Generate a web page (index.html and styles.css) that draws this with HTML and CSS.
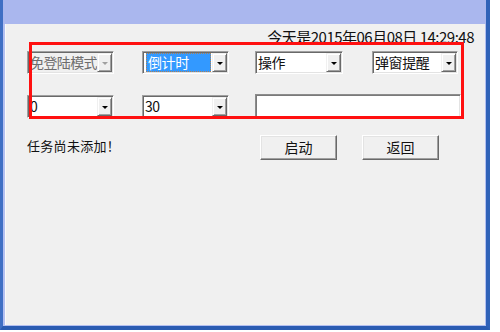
FILE: index.html
```html
<!DOCTYPE html>
<html lang="zh-CN">
<head>
<meta charset="utf-8">
<link rel="stylesheet" href="styles.css">
</head>
<body>
<div class="window">
  <div class="titlebar"></div>
  <div class="client">
    <div class="date">今天是2015年06月08日 14:29:48</div>
    <div class="row row1">
      <div class="combo disabled c1"><span class="val">免登陆模式</span><span class="dd"><i class="arrow"></i></span></div>
      <div class="combo c2"><span class="val sel">倒计时</span><span class="dd"><i class="arrow"></i></span></div>
      <div class="combo c3"><span class="val">操作</span><span class="dd"><i class="arrow"></i></span></div>
      <div class="combo c4"><span class="val">弹窗提醒</span><span class="dd"><i class="arrow"></i></span></div>
    </div>
    <div class="row row2">
      <div class="combo c1"><span class="val">0</span><span class="dd"><i class="arrow"></i></span></div>
      <div class="combo c2"><span class="val">30</span><span class="dd"><i class="arrow"></i></span></div>
      <div class="textbox"></div>
    </div>
    <div class="row row3">
      <div class="msg">任务尚未添加！</div>
      <button class="btn b1">启动</button>
      <button class="btn b2">返回</button>
    </div>
    <div class="mark"></div>
  </div>
</div>
</body>
</html>
```

FILE: styles.css
```css
* { box-sizing: border-box; }
html, body { margin: 0; padding: 0; background: #ffffff; }
body {
  font-family: "Noto Sans CJK SC", "Noto Sans", sans-serif;
  color: #1a1a1a;
}
.window {
  width: 490px;
  height: 330px;
  background: #b3bff0;
  border-left: 3px solid #3f6fc4;
  border-right: 4px solid #2f62b8;
  border-bottom: 4px solid #2a5cb2;
  padding: 0 1px 1px 2px;
  display: flex;
  flex-direction: column;
}
.titlebar {
  height: 24px;
  background: #aab7ee;
  margin: 0 -1px 0 -2px;
  flex: none;
}
.client {
  position: relative;
  flex: 1;
  background: #f0f0f0;
  border-left: 1px solid #fafafa;
  padding-left: 21px;
}
.date {
  margin-top: 3px;
  height: 20px;
  line-height: 20px;
  font-size: 15px;
  text-align: right;
  padding-right: 11px;
  color: #111;
  letter-spacing: -0.5px;
}
.row { display: flex; align-items: flex-start; }
.row1 { margin-top: 4px; height: 23px; }
.row2 { margin-top: 21px; height: 23px; }
.row3 { margin-top: 17px; height: 25px; }

.combo {
  height: 23px;
  display: flex;
  background: #ffffff;
  border: 1px solid;
  border-color: #a0a0a0 #ffffff #ffffff #a0a0a0;
  padding: 1px;
  box-shadow: inset 1px 1px 0 #696969, inset -1px -1px 0 #e3e3e3;
  font-size: 14px;
  line-height: 19px;
}
.combo.c1 { width: 87px; }
.combo.c2 { width: 87px; margin-left: 28px; }
.combo.c3 { width: 88px; margin-left: 26px; }
.combo.c4 { width: 86px; margin-left: 29px; }
.combo .val {
  flex: 1;
  min-width: 0;
  padding-left: 1px;
  white-space: nowrap;
  color: #111;
  letter-spacing: -0.4px;
}
.combo .val.sel {
  background: #3399ff;
  color: #ffffff;
  margin: 0 1px 0 2px;
  border: 1px dotted #b08050;
  padding-left: 1px;
  line-height: 17px;
}
.combo.disabled { background: #f0f0f0; }
.combo.disabled .val { color: #6d6d6d; letter-spacing: -0.6px; }
.dd {
  width: 15px;
  flex: none;
  background: #f0f0f0;
  border: 1px solid;
  border-color: #f0f0f0 #696969 #696969 #f0f0f0;
  box-shadow: inset 1px 1px 0 #ffffff, inset -1px -1px 0 #a0a0a0;
  display: flex;
  align-items: center;
  justify-content: center;
}
.arrow {
  width: 0;
  height: 0;
  border-left: 3px solid transparent;
  border-right: 3px solid transparent;
  border-top: 3px solid #000;
  margin-top: 1px;
}
.combo.disabled .arrow { border-top-color: #a0a0a0; }

.textbox {
  width: 206px;
  height: 24px;
  margin-left: 26px;
  margin-top: -1px;
  background: #ffffff;
  border: 1px solid;
  border-color: #8c8c8c #ffffff #ffffff #8c8c8c;
  box-shadow: inset 1px 1px 0 #7a7a7a, inset -1px -1px 0 #e3e3e3;
}

.msg {
  width: 233px;
  font-size: 13px;
  line-height: 19px;
  margin-top: 1px;
  color: #111;
  letter-spacing: 0.3px;
}
.btn {
  width: 77px;
  height: 25px;
  padding: 0;
  font-family: "Noto Sans CJK SC", sans-serif;
  font-size: 14px;
  line-height: 19px;
  color: #111;
  background: #f0f0f0;
  border: 1px solid;
  border-color: #ffffff #696969 #696969 #ffffff;
  box-shadow: inset -1px -1px 0 #a0a0a0, inset 1px 1px 0 #e3e3e3;
}
.btn.b2 { margin-left: 25px; }

.mark {
  position: absolute;
  left: 23px;
  top: 18px;
  width: 435px;
  height: 77px;
  border: 3px solid #ff1010;
}
```
